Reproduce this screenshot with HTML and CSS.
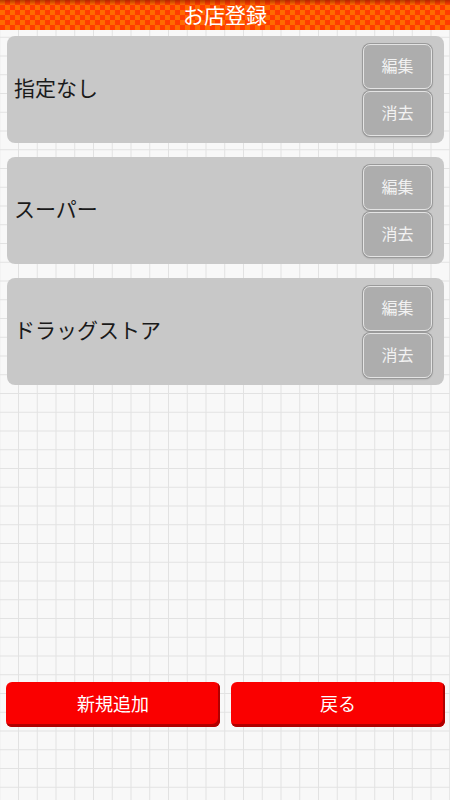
FILE: index.html
```html
<!DOCTYPE html>
<html lang="ja">
<head>
  <meta charset="UTF-8">
  <title>お店登録</title>
  <link rel="stylesheet" href="styles.css">
</head>
<body>
  <div class="page">
    <header class="title-bar">
      <h1>お店登録</h1>
    </header>

    <div class="shop-list">
      <div class="shop-card">
        <div class="shop-name">指定なし</div>
        <div class="shop-actions">
          <button class="small-btn">編集</button>
          <button class="small-btn">消去</button>
        </div>
      </div>
      <div class="shop-card">
        <div class="shop-name">スーパー</div>
        <div class="shop-actions">
          <button class="small-btn">編集</button>
          <button class="small-btn">消去</button>
        </div>
      </div>
      <div class="shop-card">
        <div class="shop-name">ドラッグストア</div>
        <div class="shop-actions">
          <button class="small-btn">編集</button>
          <button class="small-btn">消去</button>
        </div>
      </div>
    </div>

    <div class="footer-row">
      <button class="red-btn">新規追加</button>
      <button class="red-btn">戻る</button>
    </div>
  </div>
</body>
</html>
```

FILE: styles.css
```css
html, body {
  margin: 0;
  height: 100%;
}

body {
  font-family: "Noto Sans CJK JP", "Noto Sans", sans-serif;
  background-color: #f8f8f8;
  background-image:
    linear-gradient(to right, #e2e2e2 1px, transparent 1px),
    linear-gradient(to bottom, #e2e2e2 1px, transparent 1px);
  background-size: 18.75px 18.75px;
  background-position: 18px 0, 0 18px;
}

.page {
  height: 100vh;
  display: flex;
  flex-direction: column;
}

.title-bar {
  height: 30px;
  background-color: #ff6a00;
  background-image:
    linear-gradient(to bottom, rgba(120,20,0,0.55), rgba(120,20,0,0) 5px),
    conic-gradient(#ff3c00 25%, #ff6a00 0 50%, #ff3c00 0 75%, #ff6a00 0);
  background-size: 100% 100%, 10px 10px;
  display: flex;
  align-items: center;
  justify-content: center;
}

.title-bar h1 {
  margin: 0;
  color: #fff;
  font-size: 21px;
  font-weight: normal;
  line-height: 28px;
  padding-bottom: 2px;
}

.shop-list {
  display: flex;
  flex-direction: column;
  gap: 14px;
  padding: 6px 6px 0 7px;
}

.shop-card {
  height: 107px;
  box-sizing: border-box;
  background-color: #c8c8c8;
  border-radius: 8px;
  padding: 8px 12px 7px 7px;
  display: flex;
  align-items: center;
}

.shop-name {
  flex: 1;
  font-size: 21px;
  line-height: 1.2;
  padding-bottom: 5px;
  color: #1a1a1a;
}

.shop-actions {
  display: flex;
  flex-direction: column;
  gap: 2px;
}

.small-btn {
  width: 69px;
  height: 45px;
  box-sizing: border-box;
  background-color: #adadad;
  border: 1px solid #e4e4e4;
  border-radius: 7px;
  box-shadow: 0 0 0 1px #9a9a9a, 0 1px 2px rgba(0,0,0,0.3);
  color: #f2f2f2;
  font-family: inherit;
  font-size: 16px;
  line-height: 1;
  padding: 0 0 3px;
}

.footer-row {
  margin-top: auto;
  display: flex;
  gap: 11px;
  padding: 0 5px 73px 6px;
}

.red-btn {
  flex: 1;
  height: 45px;
  background-color: #fa0000;
  border: none;
  border-radius: 6px;
  box-shadow: inset -2px -3px 0 #b00000;
  color: #fff;
  font-family: inherit;
  font-size: 18px;
  line-height: 1;
  padding: 0 0 3px;
}
```
